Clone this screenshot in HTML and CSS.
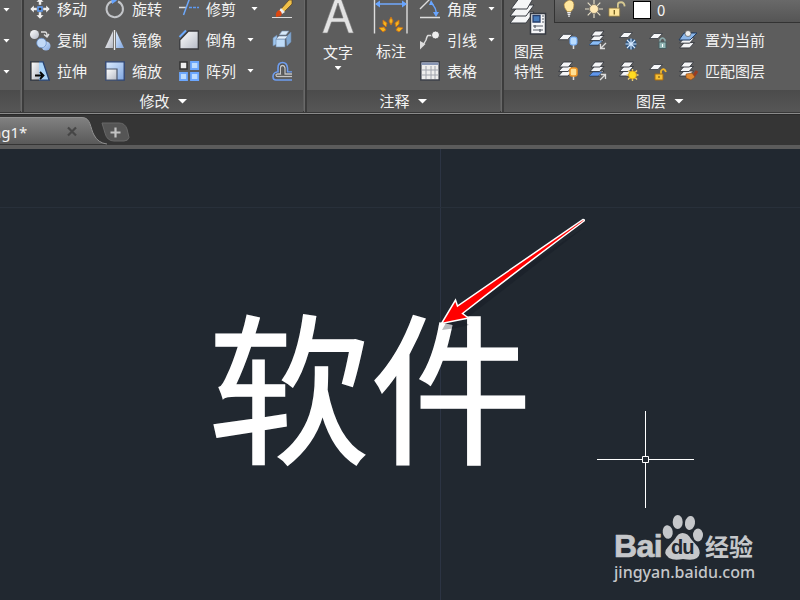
FILE: index.html
```html
<!DOCTYPE html>
<html lang="zh-CN">
<head>
<meta charset="utf-8">
<title>Drawing1</title>
<link rel="stylesheet" href="styles.css">
</head>
<body>
<svg class="defs" width="0" height="0">
  <defs>
    <linearGradient id="gw" x1="0" y1="0" x2="1" y2="1"><stop offset="0" stop-color="#fff"/><stop offset="1" stop-color="#b5bac6"/></linearGradient>
    <linearGradient id="gb" x1="0" y1="0" x2="1" y2="1"><stop offset="0" stop-color="#dcecff"/><stop offset="1" stop-color="#7fa5df"/></linearGradient>
    <symbol id="sheet" viewBox="0 0 14 6"><path d="M5 .5H13.5L9 5.5H.5Z" fill="#f5f6f8" stroke="#34383f" stroke-width=".8"/></symbol>
    <symbol id="stack" viewBox="0 0 16 16"><g fill="#f4f5f7" stroke="#33373d" stroke-width=".9"><path d="M5.500 10H15L10.500 15H1Z"/><path d="M5.500 5.500H15L10.500 10.500H1Z"/><path d="M6 1H15L11 6H2Z"/></g></symbol>
  </defs>
</svg>

<header class="ribbon">
  <section class="panel stub">
    <div class="tools"><i class="caret"></i><i class="caret"></i><i class="caret"></i></div>
    <div class="title"></div>
  </section>

  <section class="panel modify">
    <div class="tools">
      <div class="tool"><svg viewBox="0 0 20 20"><g fill="#eee" stroke="#444" stroke-width=".4"><path d="M10-1 14 3H11.500V6H8.500V3H6Z"/><path d="M10 20 14 16H11.500V13H8.500V16H6Z"/><path d="M0 10 4 6V8.500H7V11.500H4V14Z"/><path d="M20 10 16 6V8.500H13V11.500H16V14Z"/></g><path d="M8 8h4v4H8Z" fill="#333" stroke="#62a0fa" stroke-width="1.500"/></svg><span>移动</span></div>
      <div class="tool"><svg viewBox="0 0 20 20"><path d="M13 2.500A8.200 8.200 0 1 1 7 2.300" fill="none" stroke="#c3c5c9" stroke-width="2"/><path d="M6-2 12 1.500 7 5Z" fill="#65a3ff"/></svg><span>旋转</span></div>
      <div class="tool"><svg viewBox="0 0 20 20"><path d="M0 8.500H7" stroke="#ddd" stroke-width="1.500"/><path d="M10 8.500H20" stroke="#5e99ef" stroke-width="1.500" stroke-dasharray="3 1"/><path d="M4.500 16 10 1 12-1" fill="none" stroke="#6ea8fa" stroke-width="1.500"/></svg><span>修剪</span><i class="caret trim"></i></div>
      <div class="tool"><svg viewBox="0 0 20 20"><path d="M0 18.500H20" stroke="#ddd"/><path d="M9 10 17 1H20V5L12 13Z" fill="#efc04a" stroke="#4d3818" stroke-width=".6"/><path d="M9 9 13 13 10 15 7 12Z" fill="#eee"/><path d="M7 11Q11 13 9 17L4 18Q3 13 7 11Z" fill="#dc4711"/></svg></div>

      <div class="tool"><svg viewBox="0 0 20 20"><circle cx="4.500" cy="4.500" r="4.500" fill="url(#gw)"/><path d="M11 2H15Q17 2 17 6M14 4.500 17 7 19 4" fill="none" stroke="#ddd" stroke-width="1.400"/><circle cx="16" cy="16" r="4.500" fill="url(#gb)"/><circle cx="11.500" cy="13" r="4.800" fill="#c1d9f7" stroke="#5d88c6" stroke-width=".7"/></svg><span>复制</span></div>
      <div class="tool"><svg viewBox="0 0 20 20"><path d="M8 1V18H0Z" fill="url(#gw)"/><path d="M11 1V18H19Z" fill="url(#gb)"/><path d="M9.500 0V20" stroke="#ededed" stroke-width="1.400"/></svg><span>镜像</span></div>
      <div class="tool"><svg viewBox="0 0 20 20"><path d="M9.500 1H19.300V19H.8V10Z" fill="url(#gw)" stroke="#38393c" stroke-width="1.300"/><path d="M.5 7 7 .5" stroke="#6cabff" stroke-width="2"/></svg><span>倒角</span><i class="caret"></i></div>
      <div class="tool"><svg viewBox="0 0 20 20"><g stroke="#6d87aa" stroke-width=".6"><path d="M7 5 10 1H17L14 5Z" fill="#d8e9f8"/><path d="M1 8 5 5V14L1 16Z" fill="#9dc5ee"/><path d="M14 7 19 2V12L15 16Z" fill="#81a9d3"/><path d="M4 9H13V17H4Z" fill="#bedbf7"/><path d="M4 9 7 6H16L13 9Z" fill="#e3f0fc"/></g></svg></div>

      <div class="tool"><svg viewBox="0 0 20 20"><path d="M1 .8H13L19.200 19.200H1Z" fill="#acd5f9" stroke="#264170" stroke-width="1.300"/><path d="M1 .8H9V19.200H1Z" fill="url(#gw)"/><path d="M9 .8H1V19.200H9" fill="none" stroke="#333" stroke-width="1.200"/><path d="M5 14.500H12M10 11 13.500 14.500 10 18" fill="none" stroke="#050505" stroke-width="1.800"/></svg><span>拉伸</span></div>
      <div class="tool"><svg viewBox="0 0 20 20"><path d="M.8.8H19.200V19.200H.8Z" fill="url(#gb)" stroke="#2e4472" stroke-width="1.300"/><path d="M1 8H12V19H1Z" fill="url(#gw)" stroke="#4c566b" stroke-width="1.200"/></svg><span>缩放</span></div>
      <div class="tool"><svg viewBox="0 0 20 20"><path d="M1 1H8V8H1Z" fill="#eee" stroke="#333" stroke-width="1.500"/><path d="M12 1H19.200V8H12ZM1 12H8V19H1ZM12 12H19.200V19H12Z" fill="#bddcff" stroke="#6ba7ff" stroke-width="1.800"/></svg><span>阵列</span><i class="caret"></i></div>
      <div class="tool"><svg viewBox="0 0 20 20"><path d="M20 19H4Q1 19 1 15.500T5 11H6V7Q6 1.500 10.500 1.500T15.500 7V11H20" fill="none" stroke="#6d9df0" stroke-width="1.600"/><path d="M20 15.500H5.500M8.500 13V7Q8.500 4.500 10.500 4.500T13 7V13H20M8.500 13H5.500Q4 13 4 14.200T5.500 15.500" fill="none" stroke="#444" stroke-width="2.600"/><path d="M20 15.500H5.500Q4 15.500 4 14.200T5.500 13H8.500V7Q8.500 4.500 10.500 4.500T13 7V13H20" fill="none" stroke="#c6c6c6" stroke-width="1.300"/></svg></div>
    </div>
    <div class="title"><span>修改</span><i class="caret big"></i></div>
  </section>

  <section class="panel annotate">
    <div class="tools">
      <div class="large text"><svg width="34" height="40" viewBox="0 0 34 40"><path fill-rule="evenodd" d="M1.500 39 14.500 3H19.500L32.500 39H27.500L23.500 28H10.500L6.500 39ZM12 24H22L17 9Z" fill="#e3e3e3" stroke="#777" stroke-width=".6"/></svg><span>文字</span><i class="caret"></i></div>
      <div class="large dim"><svg width="36" height="40" viewBox="0 0 36 40"><path d="M1.500 2V39.500M34 2V39.500" stroke="#ddd" stroke-width="1.400"/><path d="M3 10H33" stroke="#70a9fc" stroke-width="1.500"/><path d="M2 10 7 6.500V13.500ZM34 10 29 6.500V13.500Z" fill="#68a5ff"/><g fill="#f4b51d" stroke="#c87018" stroke-width=".9"><path d="M18 23 20 27 18 31 16 27Z"/><path d="M10 26 14 29 13 33 10 30Z"/><path d="M26 26 22 29 23 33 26 30Z"/><path d="M6 34 11 33 13 36 10 38Z"/><path d="M30 34 25 33 23 36 26 38Z"/></g></svg><span>标注</span></div>
      <div class="column">
        <div class="tool"><svg viewBox="0 0 20 20"><path d="M0 10 11-1M0 18.500H20" fill="none" stroke="#ddd" stroke-width="1.400"/><path d="M11 4Q17 9 16 16" fill="none" stroke="#68a5ff" stroke-width="1.500"/><path d="M9 6 11 1 14 6ZM13 13H19L16 18Z" fill="#68a5ff"/></svg><span>角度</span><i class="caret"></i></div>
        <div class="tool"><svg viewBox="0 0 20 20"><path d="M13 5.500H8Q7 6 6 10L2.500 16" fill="none" stroke="#ddd" stroke-width="1.400"/><path d="M0 11 5.500 14 0 19.500Z" fill="#ddd"/><circle cx="15.500" cy="5" r="4" fill="#eee" stroke="#444" stroke-width=".8"/></svg><span>引线</span><i class="caret"></i></div>
        <div class="tool"><svg viewBox="0 0 20 20"><path d="M.8.8H19.200V19H.8Z" fill="#eee" stroke="#3c4049" stroke-width="1.500"/><path d="M1.500 1.500H18.500V4H1.500Z" fill="#8795b4"/><path d="M2 9H18.500M2 14H18.500M6 5V18M11 5V18M15 5V18" stroke="#a0a4ad"/></svg><span>表格</span></div>
      </div>
    </div>
    <div class="title"><span>注释</span><i class="caret big"></i></div>
  </section>

  <section class="panel layers">
    <div class="tools">
      <div class="large props"><svg width="38" height="42" viewBox="0 0 38 42"><g fill="#f5f6f7" stroke="#393c42"><path d="M9 18H24L16 29H0Z"/><path d="M9 11H24L16 22H0Z"/><path d="M10 3H24L17 15H1Z"/></g><path d="M20.500 19.500H35.500V40H20.500Z" fill="#f6f7f9" stroke="#363a42" stroke-width="1.500"/><path d="M23 21.500H30V28H23Z" fill="#477cbd" stroke="#263e6b" stroke-width="1.300"/><path d="M32 22H34M32 25H34M32 28H34M23 32H33M23 36H33M25 31V34M30 35V38" stroke="#545a65" stroke-width="1.200"/></svg><span>图层</span><span>特性</span></div>
      <div class="side">
        <div class="combo">
          <svg viewBox="0 0 20 20"><path d="M8 13Q4 8 4.500 5T10 0Q15 0 15.500 5T12 13Z" fill="#ffe7a0" stroke="#a37b35" stroke-width=".7"/><path d="M8 14H12M8.500 16H11.500M9 18H11" stroke="#eee" stroke-width="1.400"/></svg>
          <svg viewBox="0 0 20 20"><path d="M10 0V20M0 10H20M3 3 17 17M17 3 3 17" stroke="#e7dfc8" stroke-width="1.300"/><circle cx="10" cy="10" r="5" fill="#ffe8b5" stroke="#827b6c"/></svg>
          <svg viewBox="0 0 20 20"><path d="M11 9V5Q11 2.500 14.500 2.500T18.500 7" fill="none" stroke="#d6c891" stroke-width="2"/><path d="M1 9H13V18H1Z" fill="#ffe69a" stroke="#866f3c" stroke-width=".8"/><path d="M7 11V16" stroke="#786222" stroke-width="1.500"/></svg>
          <b class="swatch"></b><span>0</span>
        </div>
        <div class="grid">
          <svg viewBox="0 0 20 20"><use href="#sheet" x="0" y="3" width="15" height="8"/><path d="M15.500 14V19" stroke="#ddd" stroke-width="1.500"/><rect x="12" y="7" width="7" height="8" rx="2" fill="#b9dcff" stroke="#6da9f7"/></svg>
          <svg viewBox="0 0 20 20"><use href="#stack" x="1" y="0" width="16" height="16"/><path d="M5 11H14L10 15H1Z" fill="#8bbdf5" stroke="#25456b" stroke-width=".6"/><path d="M18 13 13 18M12.500 14V18.500H17" fill="none" stroke="#ddd" stroke-width="1.300"/></svg>
          <svg viewBox="0 0 20 20"><use href="#sheet" x="0" y="1" width="14" height="8"/><circle cx="12" cy="14" r="5.500" fill="#315781"/><path d="M12 8.500V19.500M6.500 14H17.500M8 10 16 18M16 10 8 18" stroke="#d2e7ff" stroke-width="1.100"/></svg>
          <svg viewBox="0 0 20 20"><use href="#sheet" x="0" y="2" width="14" height="8"/><path d="M11 13V10Q13.500 6 16 10V13" fill="none" stroke="#8cabac" stroke-width="1.500"/><path d="M10 12H17V18.500H10Z" fill="#92b6b5" stroke="#475d60"/><path d="M13.500 14V17" stroke="#fff"/></svg>
          <svg viewBox="0 0 20 20"><use href="#stack" x="0" y="2" width="18" height="17"/><path d="M6 3H19L12 10H1Z" fill="#8bb6e9" stroke="#213d63"/><circle cx="10" cy="3.500" r="3" fill="#eee" stroke="#555" stroke-width=".7"/></svg>
          <span>置为当前</span>
          <svg viewBox="0 0 20 20"><use href="#stack" x="-1" y="0" width="17" height="16"/><path d="M15.500 14V19" stroke="#ddd" stroke-width="1.500"/><rect x="12" y="7" width="7" height="8" rx="2" fill="#ffe094" stroke="#ef9423" stroke-width="1.500"/></svg>
          <svg viewBox="0 0 20 20"><use href="#stack" x="1" y="0" width="16" height="16"/><path d="M5 11H14L10 15H1Z" fill="#6096eb" stroke="#25456b" stroke-width=".6"/><path d="M12 19 17 14M13 13.500H17.500V18" fill="none" stroke="#ddd" stroke-width="1.300"/></svg>
          <svg viewBox="0 0 20 20"><use href="#stack" x="-1" y="0" width="17" height="16"/><path d="M13.500 8V20M7.500 14H19.500M9 9.500 18 18.500M18 9.500 9 18.500" stroke="#eecf76" stroke-width="1.400"/><circle cx="13.500" cy="14" r="4" fill="#ffdc20" stroke="#c88d19" stroke-width=".7"/></svg>
          <svg viewBox="0 0 20 20"><use href="#sheet" x="0" y="2" width="14" height="8"/><path d="M12 13V10Q15 6 17 11" fill="none" stroke="#f1b729" stroke-width="1.800"/><path d="M6 13H14V19H6Z" fill="#f6c034" stroke="#a66b12"/><path d="M10 15V17" stroke="#654811"/></svg>
          <svg viewBox="0 0 20 20"><use href="#stack" x="0" y="0" width="17" height="16"/><path d="M19 10 15 16" stroke="#993c21" stroke-width="3"/><path d="M8 13 14 12 17 16 13 19 8 17Z" fill="#df8730" stroke="#804519" stroke-width=".6"/></svg>
          <span>匹配图层</span>
        </div>
      </div>
    </div>
    <div class="title"><span>图层</span><i class="caret big"></i></div>
  </section>
</header>

<nav class="tabs">
  <svg class="tabshape" width="132" height="29" viewBox="0 0 132 29"><defs><linearGradient id="tg" x1="0" y1="0" x2="0" y2="1"><stop offset="0" stop-color="#818181"/><stop offset="1" stop-color="#595959"/></linearGradient></defs><path d="M0 2.500H82C91 2.500 90 13 94 20Q98 28 106 29H0Z" fill="url(#tg)"/><path d="M0 2.500H82C91 2.500 90 13 94 20Q98 28 107 29" fill="none" stroke="#929292"/><path d="M102 8H119Q125 8 127 14L129 22.500Q128 26 124 26H114Q107 26 105 18Z" fill="#555" stroke="#686868"/><path d="M110.500 17.500H120.500M115.500 12.500V22.500" stroke="#c2c2c2" stroke-width="2.200"/><path d="M68 12.500 76 20.500M76 12.500 68 20.500" stroke="#464646" stroke-width="2.200"/></svg>
  <span class="tabname">ng1*</span>
</nav>

<main class="canvas">
  <div class="axis vertical"></div><div class="axis horizontal"></div>
  <div class="drawing-text">软件</div>
  <svg class="pointer" width="160" height="125" viewBox="0 0 160 125"><path d="M146 9 17 96 15 91Q8 102 2 113Q15 112 29 108L23 104Z" transform="translate(0 3)" fill="#111820" opacity=".3"/><path d="M144 7Q145 5.500 143 5.500L17.500 92 15.500 86 1.500 109.500 28.500 104 22.500 99.500Q82 53 144 7Z" fill="#f00" stroke="#fff" stroke-width="1.500"/></svg>
  <svg class="cross" width="97" height="97" viewBox="0 0 97 97"><path d="M0 48.500H45M52 48.500H97M48.500 0V45M48.500 52V97M45.500 45.500H51.500V51.500H45.500Z" fill="none" stroke="#fff"/></svg>
  <div class="watermark">
    <div class="brand"><span class="bai">Bai</span><span class="paw"><svg width="42" height="46" viewBox="0 0 42 46"><g fill="#c5c7ca"><ellipse cx="5.700" cy="17" rx="5" ry="6.800" transform="rotate(-8 5.700 17)"/><ellipse cx="15.700" cy="7" rx="5" ry="7"/><ellipse cx="28" cy="8" rx="5" ry="7" transform="rotate(10 28 8)"/><ellipse cx="36" cy="20" rx="5" ry="6.500"/><path d="M20.500 18Q26 18 29 24L36 32Q40 39 35 43Q31 46 21 44Q12 46 7 43Q0 38 6 32L13 24Q16 18 20.500 18Z"/></g></svg><b>du</b></span><span class="jy">经验</span></div>
    <div class="url">jingyan.baidu.com</div>
  </div>
</main>
</body>
</html>
```

FILE: styles.css
```css
* { box-sizing: border-box; }
body {
  margin: 0;
  width: 800px;
  height: 600px;
  overflow: hidden;
  display: flex;
  flex-direction: column;
  background: #212830;
  color: #f3f3f3;
  font: 15px/20px "Noto Sans CJK SC", sans-serif;
}
svg { display: block; flex: none; overflow: visible; }
.defs { position: absolute; }
.ribbon {
  flex: none;
  height: 115px;
  display: flex;
  overflow: hidden;
  background: #5d5d5d;
  border-bottom: 1px solid #292929;
  box-shadow: inset 0 -1px #8b8b8b, inset 0 -3px #383838;
}
.panel {
  flex: none;
  height: 112px;
  display: flex;
  flex-direction: column;
  border-right: 2px solid #3c3c3c;
  box-shadow: inset -1px 0 #696969;
}
.stub { width: 24px; }
.modify { width: 283px; }
.annotate { width: 197px; }
.layers { width: 316px; }
.tools { flex: none; height: 90px; overflow: hidden; }
.title {
  height: 22px;
  margin-right: 2px;
  display: flex;
  align-items: center;
  justify-content: center;
  gap: 8px;
  background: linear-gradient(#4b4b4b, #565656);
}
.caret {
  flex: none;
  width: 7px;
  height: 4px;
  background: #fff;
  clip-path: polygon(0 0, 100% 0, 50% 100%);
}
.caret.big { width: 10px; height: 5px; }
.stub .tools {
  display: grid;
  grid-template-rows: 31px 31px 31px;
  align-items: center;
  padding-left: 3px;
}
.stub .caret { margin-top: -12px; }
.modify .tools {
  display: grid;
  grid-template: repeat(3, 31px) / 75px 74px 93px 22px;
  padding-left: 6px;
}
.tool {
  display: flex;
  align-items: center;
  height: 31px;
  margin-top: -7px;
  gap: 7px;
  white-space: nowrap;
}
.tool svg { width: 20px; height: 20px; }
.tool .caret { margin-left: 4px; }
.tool .trim { margin-left: 8px; }
.annotate .tools { display: flex; padding-left: 14px; }
.large {
  display: flex;
  flex-direction: column;
  align-items: center;
  flex: none;
}
.large svg { margin-top: -6px; }
.large.text { width: 34px; }
.large.text span { margin-top: 8px; }
.large.text .caret { margin-top: 4px; }
.large.dim { width: 36px; margin-left: 18px; }
.large.dim span { margin-top: 7px; }
.column { margin-left: 11px; }
.column .tool { margin-top: 0; }
.column .tool:first-child { margin-top: -7px; }
.layers .tools { display: flex; padding-left: 7px; }
.large.props { width: 38px; margin-left: -1px; }
.large.props span:first-of-type { margin-top: 5px; }
.side { width: 260px; flex: none; margin-left: 6px; }
.combo {
  height: 23px;
  display: flex;
  align-items: flex-start;
  padding-left: 5px;
  border-left: 1px solid #333;
  border-bottom: 1px solid #333;
  background: linear-gradient(#696969, #555);
}
.combo svg { width: 18px; height: 18px; margin-right: 7px; }
.combo svg:nth-child(2) { margin-right: 5px; }
.combo svg:nth-child(3) { margin-right: 7px; }
.swatch { width: 18px; height: 18px; margin-top: 1px; background: #fff; border: 1px solid #000; }
.combo span { margin: 0 0 0 6px; }
.grid {
  display: grid;
  grid-template: repeat(2, 31px) / 30px 31px 30px 29px 27px 80px;
  align-items: center;
  padding-left: 4px;
  margin-top: 1px;
  white-space: nowrap;
}
.grid svg { width: 20px; height: 20px; }
.tabs {
  flex: none;
  height: 34px;
  background: #353535;
  border-bottom: 4px solid #5b5b5b;
  display: grid;
}
.tabshape, .tabname { grid-area: 1 / 1; }
.tabname {
  font: 15px/20px "Noto Sans", sans-serif;
  margin: 7px 0 0 -8px;
}
.canvas { position: relative; flex: 1; background: #212830; }
.axis { position: absolute; background: #2c3443; }
.vertical { left: 440px; top: 0; width: 1px; height: 451px; }
.horizontal { top: 58px; left: 0; height: 1px; width: 800px; background: #28303a; }
.drawing-text {
  position: absolute;
  left: 208px;
  top: 116px;
  font: 400 162px/234px "Noto Sans CJK SC", sans-serif;
  -webkit-text-stroke: 1.5px #fff;
  color: #fff;
  white-space: nowrap;
}
.pointer { position: absolute; left: 440px; top: 65px; }
.cross { position: absolute; left: 597px; top: 262px; }
.watermark {
  position: absolute;
  left: 614px;
  top: 366px;
  width: 144px;
  color: #c5c7ca;
}
.brand { display: flex; align-items: flex-end; height: 46px; }
.bai {
  width: 48px;
  font: bold 32px/32px "Liberation Sans", sans-serif;
  letter-spacing: -.6px;
  -webkit-text-stroke: .7px #c5c7ca;
  margin-bottom: -1px;
}
.paw { position: relative; width: 43px; }
.paw b {
  position: absolute;
  left: 9px;
  top: 20px;
  color: #212830;
  font: bold 20px/24px "Liberation Sans", sans-serif;
  letter-spacing: -1px;
}
.jy {
  font: bold 24px/24px "Noto Sans CJK SC", sans-serif;
  white-space: nowrap;
  margin-bottom: 3px;
}
.url { font: 500 16px/22px "Noto Sans", sans-serif; }
```
